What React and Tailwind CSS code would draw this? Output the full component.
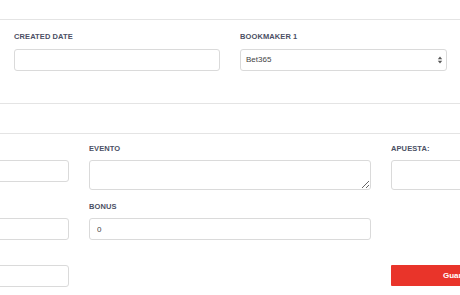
import React from "react";

const label = "block text-[7.5px] leading-[8px] font-bold uppercase text-[#4b5064] tracking-[0.1px]";
const input =
  "block w-full h-[22px] border border-[#dadada] rounded-[3px] bg-white px-[7px] text-[8px] text-[#444] outline-none";

function Field({ title, children, className = "" }) {
  return (
    <div className={`w-[282px] shrink-0 ${className}`}>
      {title ? (
        <label className={`${label} mb-[7px]`}>{title}</label>
      ) : (
        <div className="h-[15px]" />
      )}
      {children}
    </div>
  );
}

export default function App() {
  return (
    <div className="w-[460px] h-[295px] overflow-hidden bg-white font-['Liberation_Sans',Arial,sans-serif]">
      <div className="h-[19px]" />

      {/* Card 1 */}
      <div className="border-y border-[#e4e4e4] pt-[13px] pb-[32px] pl-[14px] pr-[13px]">
        <div className="grid grid-cols-[206px_207px] gap-x-[20px]">
          <div>
            <label className={`${label} mb-[8px]`}>Created Date</label>
            <input className={input} />
          </div>
          <div>
            <label className={`${label} mb-[8px]`}>Bookmaker 1</label>
            <div className="relative">
              <select className={`${input} appearance-none pl-[5px]`} defaultValue="Bet365">
                <option>Bet365</option>
                <option>Betfair</option>
                <option>William Hill</option>
              </select>
              <svg
                className="absolute right-[4px] top-[7px] pointer-events-none"
                width="6"
                height="8"
                viewBox="0 0 6 8"
              >
                <path d="M3 0.5 L5.2 3.2 H0.8 Z" fill="#555" />
                <path d="M3 7.5 L5.2 4.8 H0.8 Z" fill="#555" />
              </svg>
            </div>
          </div>
        </div>
      </div>

      <div className="h-[29px]" />

      {/* Card 2 */}
      <div className="border-t border-[#e4e4e4] pt-[11px]">
        <div className="ml-[-213px] flex flex-col">
          <div className="flex items-start gap-x-[20px]">
            <Field>
              <input className={input} />
            </Field>
            <Field title="Evento">
              <textarea className={`${input} h-[30px] py-[3px] resize-y`} />
            </Field>
            <Field title="Apuesta:">
              <input className={`${input} h-[30px]`} />
            </Field>
          </div>

          <div className="flex items-start gap-x-[20px] mt-[13px]">
            <Field>
              <input className={input} />
            </Field>
            <Field title="Bonus">
              <input className={input} defaultValue="0" />
            </Field>
          </div>

          <div className="flex items-start gap-x-[20px] mt-[10px]">
            <Field>
              <input className={input} />
            </Field>
            <div className="w-[282px] shrink-0" />
            <div className="w-[282px] shrink-0 pt-[15px]">
              <button className="block w-[135px] h-[21px] bg-[#e9342a] text-white text-[8px] font-bold rounded-[1px]">
                Guardar
              </button>
            </div>
          </div>
        </div>
      </div>
    </div>
  );
}
